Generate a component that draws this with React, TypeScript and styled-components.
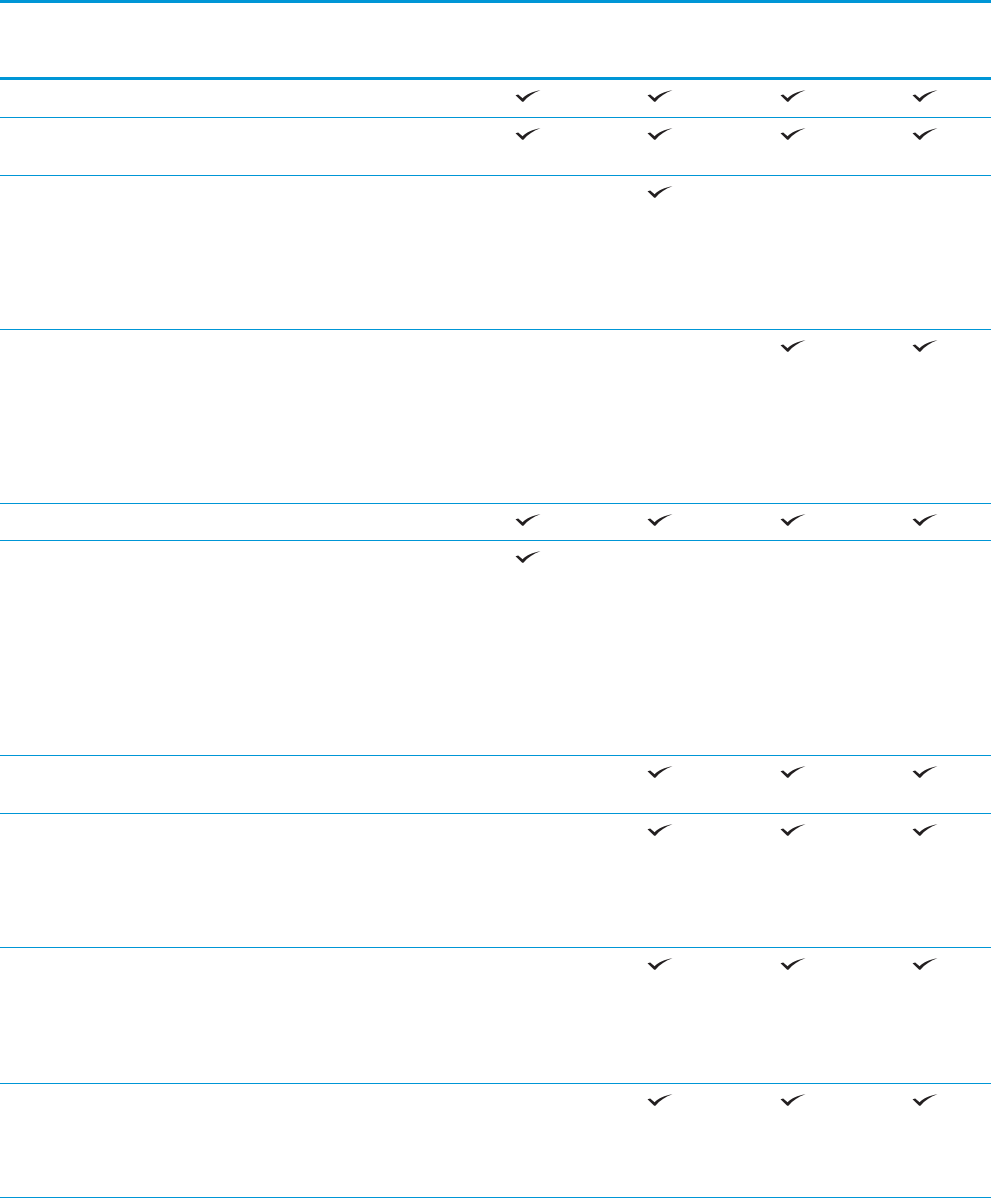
import styled, { createGlobalStyle } from 'styled-components';

const GlobalStyle = createGlobalStyle`
  html, body {
    margin: 0;
    padding: 0;
    background: #fff;
    font-family: 'Liberation Sans', Arial, sans-serif;
  }
`;

const LINE = '#0096d6';

const Table = styled.div`
  width: 991px;
  border-top: 3px solid ${LINE};
  display: flex;
  flex-direction: column;
`;

const Header = styled.div`
  height: 77px;
  box-sizing: border-box;
  border-bottom: 3px solid ${LINE};
`;

const Row = styled.div<{ $h: number }>`
  height: ${(p) => p.$h}px;
  box-sizing: border-box;
  border-bottom: 1px solid ${LINE};
  display: grid;
  grid-template-columns: 462px repeat(4, 1fr);
`;

const Cell = styled.div`
  display: flex;
  justify-content: center;
  align-items: flex-start;
  padding-top: 10px;
`;

const Check = () => (
  <svg width="26" height="12" viewBox="0 0 26 12">
    <path
      d="M0.5 5.3 L3.2 4.6 L7.6 8.2 C11.5 4.4 17.5 1.4 25.5 0.2 C18.5 2.6 12.8 6.4 8.4 11.8 L7.2 11.8 Z"
      fill="#231f20"
    />
  </svg>
);

const rows: { h: number; checks: boolean[] }[] = [
  { h: 38, checks: [true, true, true, true] },
  { h: 58, checks: [true, true, true, true] },
  { h: 154, checks: [false, true, false, false] },
  { h: 174, checks: [false, false, true, true] },
  { h: 37, checks: [true, true, true, true] },
  { h: 215, checks: [true, false, false, false] },
  { h: 58, checks: [false, true, true, true] },
  { h: 134, checks: [false, true, true, true] },
  { h: 136, checks: [false, true, true, true] },
  { h: 114, checks: [false, true, true, true] },
];

export default function App() {
  return (
    <>
      <GlobalStyle />
      <Table>
        <Header />
        {rows.map((r, i) => (
          <Row key={i} $h={r.h}>
            <Cell />
            {r.checks.map((c, j) => (
              <Cell key={j}>{c && <Check />}</Cell>
            ))}
          </Row>
        ))}
      </Table>
    </>
  );
}
